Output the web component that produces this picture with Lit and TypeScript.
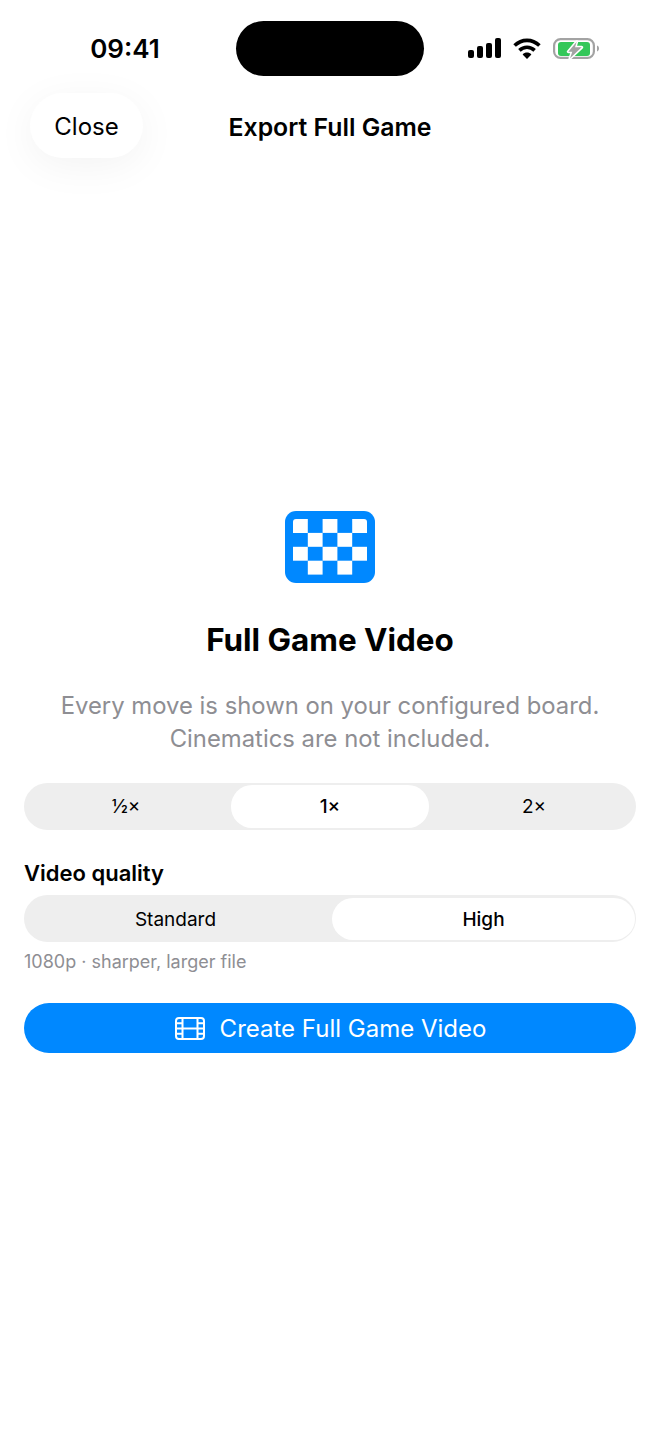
import { LitElement, html, css, svg } from 'lit';
import { customElement } from 'lit/decorators.js';

const checkerCells = [
  [2, 0],
  [1, 1], [3, 1],
  [0, 2], [2, 2], [4, 2],
  [1, 3], [3, 3],
];

@customElement('app-root')
export class AppRoot extends LitElement {
  static styles = css`
    :host {
      display: block;
      height: 1434px;
      overflow: hidden;
      background: #fff;
      color: #000;
      font-family: Inter, 'Liberation Sans', sans-serif;
    }
    .status {
      display: grid;
      grid-template-columns: 236px 188px 236px;
      height: 55px;
      padding-top: 21px;
    }
    .time {
      padding-left: 14px;
      text-align: center;
      font-size: 26px;
      font-weight: 600;
      line-height: 55px;
    }
    .island {
      background: #000;
      border-radius: 28px;
    }
    .status-icons {
      display: flex;
      align-items: center;
      padding-left: 44px;
    }
    .status-icons svg {
      display: block;
    }
    .wifi {
      margin-left: 12px;
    }
    .battery {
      margin-left: 12px;
    }
    .nav {
      display: grid;
      grid-template-columns: 1fr auto 1fr;
      align-items: center;
      margin-top: 17px;
    }
    .close {
      justify-self: start;
      width: 113px;
      height: 65px;
      margin-left: 30px;
      border-radius: 33px;
      background: #fff;
      box-shadow: 0 8px 40px rgba(0, 0, 0, 0.05);
      font-size: 24px;
      line-height: 67px;
      text-align: center;
    }
    .title {
      padding-top: 2px;
      font-size: 24.8px;
      font-weight: 600;
    }
    .main {
      display: flex;
      flex-direction: column;
      padding: 353px 24px 0;
    }
    .logo {
      display: block;
      align-self: center;
    }
    h1 {
      margin: 38px 0 0;
      font-size: 31.4px;
      line-height: 38px;
      font-weight: 700;
      text-align: center;
    }
    .intro {
      margin: 30px 0 0;
      font-size: 23.85px;
      line-height: 33px;
      color: #8e8e93;
      text-align: center;
    }
    .segments {
      display: flex;
      height: 47px;
      box-sizing: border-box;
      border-radius: 24px;
      background: #eeeeee;
      font-size: 19px;
    }
    .segments span {
      flex: 1;
      display: flex;
      align-items: center;
      justify-content: center;
      border-radius: 21px;
    }
    .segments span.on {
      background: #fff;
      font-weight: 500;
    }
    .speed {
      margin-top: 28px;
      padding: 2px 0 2px;
    }
    .speed span.on {
      flex: 0 0 198px;
      margin: 0 3px;
    }
    .label {
      margin-top: 30px;
      font-size: 22px;
      line-height: 26px;
      font-weight: 600;
    }
    .quality {
      gap: 5px;
      margin-top: 9px;
      padding: 3px 1px 2px 0;
    }
    .caption {
      margin-top: 10px;
      font-size: 18px;
      line-height: 20px;
      color: #8e8e93;
    }
    .create {
      display: flex;
      align-items: center;
      justify-content: center;
      gap: 15px;
      height: 50px;
      margin-top: 31px;
      padding-left: 1px;
      border-radius: 25px;
      background: #0088ff;
      color: #fff;
      font-size: 24px;
    }
  `;

  render() {
    return html`
      <div class="status">
        <div class="time">09:41</div>
        <div class="island"></div>
        <div class="status-icons">
          <svg width="33" height="21" viewBox="0 0 33 21" fill="#000">
            <rect x="0" y="12" width="6" height="8" rx="2"></rect>
            <rect x="9" y="8" width="6" height="12" rx="2"></rect>
            <rect x="18" y="5" width="6" height="15" rx="2"></rect>
            <rect x="27" y="0" width="6" height="20" rx="2"></rect>
          </svg>
          <svg class="wifi" width="28" height="21" viewBox="0 0 28 21" fill="none" stroke="#000" stroke-width="3.6">
            <path d="M1.6 7.6C8.6 .6 19.4 .6 26.4 7.6"></path>
            <path d="M6.4 12.4C10.8 8.2 17.2 8.2 21.6 12.4"></path>
            <path d="M14 21 9.6 16.4C12 14 16 14 18.4 16.4Z" fill="#000" stroke="none"></path>
          </svg>
          <svg class="battery" width="46" height="21" viewBox="0 0 46 21" fill="none">
            <rect x="1.100" y="1.100" width="39.800" height="18.800" rx="6.500" stroke="#a3a3a3" stroke-width="2.200"></rect>
            <rect x="5" y="4" width="32" height="14" rx="3" fill="#34c759"></rect>
            <path d="M44 7.500c1.400.4 2 1.600 2 3s-.6 2.600-2 3Z" fill="#a3a3a3"></path>
            <path
              d="M23.700 3.700 15.300 13.700H19.300L17 20.300 28.700 9.300H22Z"
              fill="#a3a3a3"
              stroke="#fff"
              stroke-width="3"
              stroke-linejoin="round"
              paint-order="stroke"
            ></path>
          </svg>
        </div>
      </div>

      <div class="nav">
        <div class="close">Close</div>
        <div class="title">Export Full Game</div>
      </div>

      <div class="main">
        <svg class="logo" width="90" height="72" viewBox="0 0 90 72">
          <rect width="90" height="72" rx="11" fill="#0088ff"></rect>
          <path d="M8 21.900V11a3 3 0 0 1 3-3H22.800V21.900Z" fill="#fff"></path>
          <path d="M67.200 8H79a3 3 0 0 1 3 3V21.900H67.200Z" fill="#fff"></path>
          ${checkerCells.map(
            ([col, row]) => svg`<rect x=${8 + col * 14.8} y=${8 + row * 13.9} width="14.8" height="13.9" fill="#fff"></rect>`
          )}
        </svg>
        <h1>Full Game Video</h1>
        <p class="intro">Every move is shown on your configured board.<br />Cinematics are not included.</p>

        <div class="segments speed">
          <span>½×</span>
          <span class="on">1×</span>
          <span>2×</span>
        </div>

        <div class="label">Video quality</div>
        <div class="segments quality">
          <span>Standard</span>
          <span class="on">High</span>
        </div>
        <div class="caption">1080p · sharper, larger file</div>

        <div class="create">
          <svg width="30" height="23" viewBox="0 0 30 23" fill="none" stroke="#fff" stroke-width="2">
            <rect x="1" y="1" width="28" height="21" rx="3"></rect>
            <path d="M7.500 1V22M22.500 1V22M7.500 11.500H22.500M1 6.200H7.500M1 11.500H7.500M1 16.800H7.500M22.500 6.200H29M22.500 11.500H29M22.500 16.800H29"></path>
          </svg>
          <span>Create Full Game Video</span>
        </div>
      </div>
    `;
  }
}
